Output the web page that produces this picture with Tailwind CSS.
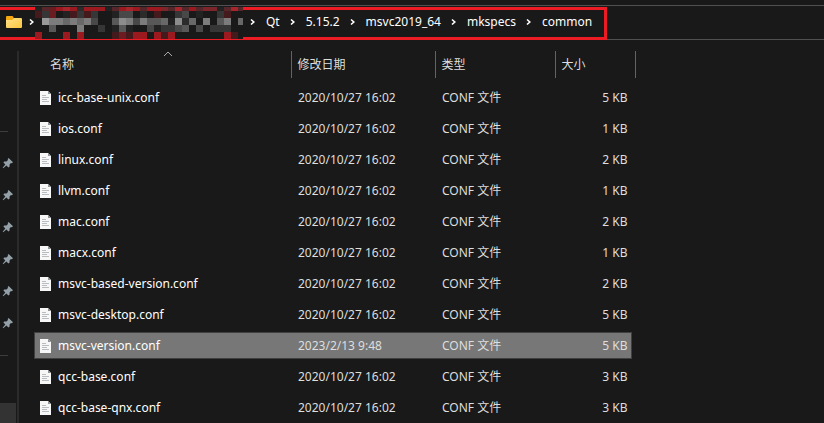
<!DOCTYPE html>
<html lang="zh-CN">
<head>
<meta charset="utf-8">
<meta name="viewport" content="width=device-width, initial-scale=1">
<title>common</title>
<script src="https://cdn.jsdelivr.net/npm/@tailwindcss/browser@4"></script>
</head>
<body class="bg-[#191919] text-[#dedede] text-[12px] leading-4 font-['Noto_Sans','Noto_Sans_CJK_SC',sans-serif]">
<svg class="hidden" aria-hidden="true">
  <symbol id="chev" viewBox="0 0 6 8"><path d="M1 1.5l2.8 2.5L1 6.5" fill="none" stroke="#fff" stroke-width="1.6"/></symbol>
  <symbol id="doc" viewBox="0 0 11 14"><path d="M0 0h8l3 3v11H0z" fill="#f7f7f7"/><path d="M8 0l3 3H8z" fill="#8f9496"/><path d="M2 4.5h4M2 6.5h7M2 8.5h5M2 10.5h7" stroke="#b9bdbf" stroke-width="1"/></symbol>
  <symbol id="pin" viewBox="0 0 12 12"><path d="M6.6 1L11 5.2 9.8 6.2 8.9 6 7.6 7.6 7.5 9.8 6.4 10.6 4.4 8.6 1.2 11.3.7 10.8 3.3 7.5 1.4 5.5 2.2 4.6 4.4 4.5 6 3.1 5.7 2z" fill="#94a0a8"/></symbol>
</svg>
<div class="flex flex-col h-screen overflow-hidden">
  <header class="mt-[5px] flex h-[35px] shrink-0 border-y border-[#505050]">
    <nav aria-label="路径" class="relative mt-px -mb-px flex items-center border-y-3 border-r-3 border-[#ed1c24] pl-1.5 pr-3 pb-1 text-white">
      <a href="#" aria-label="文件夹" class="mr-[7px]"><svg class="block h-[14px] w-4" viewBox="0 0 16 14"><defs><linearGradient id="f" x1="0" y1="0" x2="1" y2="1"><stop offset="0" stop-color="#ffe28a"/><stop offset="1" stop-color="#fbc63e"/></linearGradient></defs><path d="M0 2Q0 1 1 1h5q1 0 1.4 1L8 4v3H0z" fill="#f5a810"/><path d="M0 5h6l2-2h7q1 0 1 1v8q0 1-1 1H1q-1 0-1-1z" fill="url(#f)"/></svg></a>
      <svg class="h-2 w-1.5" aria-hidden="true"><use href="#chev"/></svg>
      <svg id="mosaic" class="absolute -top-[3px] left-[35px] h-8 w-52" viewBox="0 0 208 32" shape-rendering="crispEdges" aria-hidden="true"><rect width="208" height="32" fill="#191919"/></svg>
      <span class="w-[215px]"></span>
      <svg class="h-2 w-1.5" aria-hidden="true"><use href="#chev"/></svg>
      <a href="#" class="mx-2.5">Qt</a>
      <svg class="h-2 w-1.5" aria-hidden="true"><use href="#chev"/></svg>
      <a href="#" class="mx-2.5">5.15.2</a>
      <svg class="h-2 w-1.5" aria-hidden="true"><use href="#chev"/></svg>
      <a href="#" class="mx-2.5">msvc2019_64</a>
      <svg class="h-2 w-1.5" aria-hidden="true"><use href="#chev"/></svg>
      <a href="#" class="mx-2.5">mkspecs</a>
      <svg class="h-2 w-1.5" aria-hidden="true"><use href="#chev"/></svg>
      <a href="#" class="ml-2.5">common</a>
    </nav>
  </header>
  <div class="mt-[11px] flex min-h-0 grow">
    <aside class="flex w-[19px] shrink-0 flex-col border-r-2 border-[#2b2b2b]">
      <hr class="mt-20 w-2 border-[#3c3c3c]">
      <ul class="mt-[15px] flex grow-0 flex-col" id="pins"></ul>
      <hr class="mt-4 w-2 border-[#3c3c3c]">
      <div class="mt-[47px] mr-px grow bg-[#333]"></div>
    </aside>
    <main class="min-w-0 grow pl-[15px]">
      <table class="w-[602px] table-fixed border-collapse text-left">
        <colgroup><col class="w-[257px]"><col class="w-36"><col class="w-[120px]"><col></colgroup>
        <thead>
          <tr class="h-[27px]">
            <th class="relative border-r border-[#636363] p-0 pl-4 font-normal">名称<svg class="absolute top-0 left-[129px] h-[6px] w-[10px]" viewBox="0 0 10 6" aria-hidden="true"><path d="M1 5l4-4 4 4" fill="none" stroke="#aaa"/></svg></th>
            <th class="border-r border-[#636363] p-0 pl-1.5 font-normal">修改日期</th>
            <th class="border-r border-[#636363] p-0 pl-1.5 font-normal">类型</th>
            <th class="border-r border-[#636363] p-0 pl-1.5 font-normal">大小</th>
          </tr>
          <tr class="h-1"></tr>
        </thead>
        <tbody id="files"></tbody>
      </table>
    </main>
  </div>
</div>
<script>
const files = [
  ['icc-base-unix.conf', '2020/10/27 16:02', 5], ['ios.conf', '2020/10/27 16:02', 1],
  ['linux.conf', '2020/10/27 16:02', 2], ['llvm.conf', '2020/10/27 16:02', 1],
  ['mac.conf', '2020/10/27 16:02', 2], ['macx.conf', '2020/10/27 16:02', 1],
  ['msvc-based-version.conf', '2020/10/27 16:02', 2], ['msvc-desktop.conf', '2020/10/27 16:02', 5],
  ['msvc-version.conf', '2023/2/13 9:48', 5, true], ['qcc-base.conf', '2020/10/27 16:02', 3],
  ['qcc-base-qnx.conf', '2020/10/27 16:02', 3]
];
document.getElementById('files').innerHTML = files.map(([n, d, s, sel]) => {
  const b = 'flex h-[27px] items-center border-y pt-px ' + (sel ? 'bg-[#777] border-[#404040]' : 'border-transparent');
  return `<tr class="h-[31px]">
    <td class="p-0"><div class="gap-[7px] border-l pl-[5px] text-white ${b}"><svg class="h-[14px] w-[11px]" aria-hidden="true"><use href="#doc"/></svg>${n}</div></td>
    <td class="p-0"><div class="pl-[7px] ${b}">${d}</div></td>
    <td class="p-0"><div class="pl-[7px] ${b}">CONF 文件</div></td>
    <td class="p-0 pr-1"><div class="justify-end border-r pr-[3px] ${b}">${s} KB</div></td></tr>`;
}).join('');
document.getElementById('pins').innerHTML = Array(6).fill('<li class="flex h-8 items-center pl-0.5"><svg class="h-3 w-3" aria-hidden="true"><use href="#pin"/></svg></li>').join('');

// Pixelated path segment: one letter per 7px cell.
const tone = {a:'#222', b:'#2b2b2b', c:'#363636', d:'#484848', e:'#585858', f:'#686868', g:'#7c7c7c', h:'#8c8c8c', i:'#999',
  p:'#451a1c', q:'#56262a', r:'#6b1c20', s:'#7c262c', t:'#9a1a1f', u:'#a8262b'};
const rows = [
  'aqrtutbtttaqtutqttsquqtqssaquq',
  'pcr.apcpc..add.b.p..cd.a..cp..',
  '.iggfgfgd..ehgdgeefahbf.g.eg.f',
  '..e...g..c.aea..daccde.d.ccc..',
  't...t.t....prptt.tpt.......tp.'
];
let out = '';
rows.forEach((r, y) => [...r].forEach((c, x) => {
  if (tone[c]) out += `<rect x="${x * 7}" y="${y ? y * 7 - 3 : 0}" width="7" height="${y ? 7 : 4}" fill="${tone[c]}"/>`;
}));
document.getElementById('mosaic').innerHTML += out;
</script>
</body>
</html>
